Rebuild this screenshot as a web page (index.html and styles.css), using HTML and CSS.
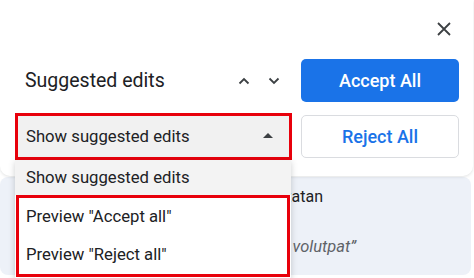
FILE: index.html
```html
<!DOCTYPE html>
<html lang="en">
<head>
    <meta charset="UTF-8">
    <meta name="viewport" content="width=device-width, initial-scale=1.0">
    <title>Suggested edits</title>
    <link rel="stylesheet" href="styles.css">
</head>
<body>
    <div class="panel">
        <div class="close-row">
            <button class="icon-btn close-btn" aria-label="Close">
                <svg width="16" height="16" viewBox="0 0 16 16"><path d="M2 2L14 14M14 2L2 14" stroke="#3c4043" stroke-width="1.8" fill="none"/></svg>
            </button>
        </div>

        <div class="row">
            <div class="title">Suggested edits</div>
            <div class="arrows">
                <svg width="12" height="8" viewBox="0 0 12 8"><path d="M1.5 6.5L6 2L10.5 6.5" stroke="#3c4043" stroke-width="1.8" fill="none"/></svg>
                <svg width="12" height="8" viewBox="0 0 12 8"><path d="M1.5 1.5L6 6L10.5 1.5" stroke="#3c4043" stroke-width="1.8" fill="none"/></svg>
            </div>
            <button class="btn accept-btn">Accept All</button>
        </div>

        <div class="row">
            <div class="select-box">
                <span>Show suggested edits</span>
                <span class="caret"></span>
            </div>
            <button class="btn reject-btn">Reject All</button>
        </div>

        <!-- open dropdown -->
        <div class="menu">
            <div class="menu-item selected">Show suggested edits</div>
            <div class="menu-group">
                <div class="menu-item">Preview "Accept all"</div>
                <div class="menu-item">Preview "Reject all"</div>
            </div>
        </div>
    </div>

    <div class="card">
        <div class="card-name">Maria Santatan</div>
        <div class="card-quote">“Aenean tempus dui volutpat”</div>
    </div>
</body>
</html>
```

FILE: styles.css
```css
body {
    margin: 0;
    font-family: Roboto, "Noto Sans", sans-serif;
    color: #202124;
    background: white;
    width: 474px;
    height: 278px;
    overflow: hidden;
}
.panel {
    position: relative;
    background: white;
    padding: 14px 15px 16px 15px;
    border-radius: 0 0 10px 10px;
    box-shadow: 0 1px 3px rgba(60, 64, 67, 0.15);
    z-index: 1;
    margin-right: 1px;
}
.close-row {
    display: flex;
    justify-content: flex-end;
    height: 30px;
    margin-bottom: 13px;
}
.icon-btn {
    background: none;
    border: none;
    padding: 0;
    cursor: pointer;
}
.close-btn {
    width: 30px;
    height: 30px;
    display: flex;
    align-items: center;
    justify-content: center;
    margin-right: -1px;
}
.row {
    display: flex;
    align-items: center;
    height: 47px;
}
.row + .row {
    margin-top: 9px;
}
.title {
    flex: 1;
    padding-left: 10px;
    font-size: 19.5px;
}
.arrows {
    display: flex;
    gap: 18px;
    margin-right: 21px;
}
.btn {
    width: 158px;
    height: 43px;
    border-radius: 5px;
    font-family: Roboto, sans-serif;
    font-size: 18px;
    font-weight: 500;
    cursor: pointer;
    margin-left: auto;
    margin-right: -1px;
}
.accept-btn {
    background: #1a73e8;
    color: white;
    border: none;
}
.reject-btn {
    background: white;
    color: #1a73e8;
    border: 1px solid #dadce0;
}
.select-box {
    box-sizing: border-box;
    width: 277px;
    height: 47px;
    border: 3px solid #e8000b;
    background: #f1f1f1;
    display: flex;
    align-items: center;
    justify-content: space-between;
    padding: 0 16px 0 8px;
    font-size: 16.7px;
}
.caret {
    width: 0;
    height: 0;
    border-left: 5px solid transparent;
    border-right: 5px solid transparent;
    border-bottom: 5px solid #3c4043;
    margin-bottom: 2px;
}
.menu {
    position: absolute;
    left: 15px;
    top: 160px;
    width: 276px;
    background: white;
    box-shadow: 0 2px 6px rgba(60, 64, 67, 0.25);
    border-radius: 0 0 4px 4px;
    font-size: 16.7px;
    padding-bottom: 3px;
}
.menu-item {
    height: 38px;
    display: flex;
    align-items: center;
    padding-left: 11px;
}
.menu-item.selected {
    height: 35px;
    background: #f3f3f3;
}
.menu-group {
    border: 3px solid #e8000b;
    margin: 0 1px 0 1px;
}
.menu-group .menu-item {
    padding-left: 7px;
    height: 37px;
}
.menu-group .menu-item:last-child {
    height: 39px;
}
.card {
    margin: 1px 3px 0 0;
    background: #edf1f8;
    border-radius: 8px;
    height: 98px;
    padding-top: 10px;
    box-sizing: border-box;
}
.card-name {
    width: 323px;
    text-align: right;
    white-space: nowrap;
    font-size: 16px;
    line-height: 20px;
    color: #202124;
}
.card-quote {
    width: 356px;
    text-align: right;
    white-space: nowrap;
    margin-top: 30px;
    font-size: 16.5px;
    line-height: 20px;
    font-style: italic;
    color: #5f6368;
}
```
